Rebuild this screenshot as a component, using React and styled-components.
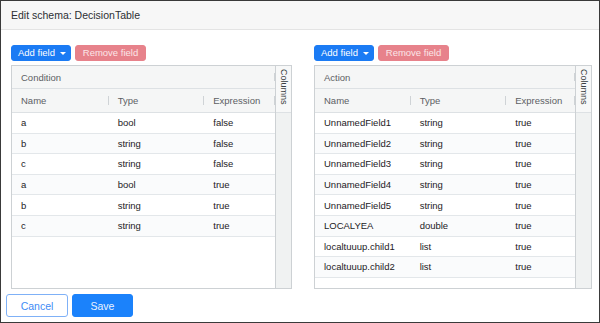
import React from "react";
import styled, { createGlobalStyle } from "styled-components";

const conditionRows = [
  ["a", "bool", "false"],
  ["b", "string", "false"],
  ["c", "string", "false"],
  ["a", "bool", "true"],
  ["b", "string", "true"],
  ["c", "string", "true"],
];

const actionRows = [
  ["UnnamedField1", "string", "true"],
  ["UnnamedField2", "string", "true"],
  ["UnnamedField3", "string", "true"],
  ["UnnamedField4", "string", "true"],
  ["UnnamedField5", "string", "true"],
  ["LOCALYEA", "double", "true"],
  ["localtuuup.child1", "list", "true"],
  ["localtuuup.child2", "list", "true"],
];

function SchemaGrid({ title, rows, colWidths }) {
  return (
    <GridBox>
      <GridMain>
        <GroupHeader>
          <HeaderCell style={{ width: "100%" }}>{title}</HeaderCell>
        </GroupHeader>
        <ColumnHeader>
          <HeaderCell style={{ width: colWidths[0] }}>Name</HeaderCell>
          <HeaderCell style={{ width: colWidths[1] }}>Type</HeaderCell>
          <HeaderCell style={{ width: colWidths[2] }}>Expression</HeaderCell>
        </ColumnHeader>
        <Body>
          {rows.map((r, i) => (
            <Row key={i} $odd={i % 2 === 1}>
              <Cell style={{ width: colWidths[0] }}>{r[0]}</Cell>
              <Cell style={{ width: colWidths[1] }}>{r[1]}</Cell>
              <Cell style={{ width: colWidths[2] }}>{r[2]}</Cell>
            </Row>
          ))}
        </Body>
      </GridMain>
      <SideBar>
        <SideTab>Columns</SideTab>
      </SideBar>
    </GridBox>
  );
}

function Panel({ title, rows, colWidths }) {
  return (
    <Column>
      <Toolbar>
        <PrimaryButton>
          Add field <Caret />
        </PrimaryButton>
        <DangerButton disabled>Remove field</DangerButton>
      </Toolbar>
      <SchemaGrid title={title} rows={rows} colWidths={colWidths} />
    </Column>
  );
}

export default function App() {
  return (
    <>
      <GlobalStyle />
      <Frame>
        <TitleBar>Edit schema: DecisionTable</TitleBar>
        <Content>
          <Panel title="Condition" rows={conditionRows} colWidths={[97, 96, 71]} />
          <Panel title="Action" rows={actionRows} colWidths={[96, 96, 69]} />
        </Content>
        <Footer>
          <OutlineButton>Cancel</OutlineButton>
          <SaveButton>Save</SaveButton>
        </Footer>
      </Frame>
    </>
  );
}

const GlobalStyle = createGlobalStyle`
  * { box-sizing: border-box; }
  html, body { margin: 0; padding: 0; background: #fff; }
  body {
    font-family: "Liberation Sans", Arial, Helvetica, sans-serif;
    color: #1d2125;
  }
`;

const Frame = styled.div`
  width: 600px;
  height: 323px;
  border: 1px solid #3a3a3a;
  display: flex;
  flex-direction: column;
  background: #fff;
  overflow: hidden;
`;

const TitleBar = styled.div`
  height: 29px;
  flex-shrink: 0;
  background: #f7f7f7;
  border-bottom: 1px solid #e4e4e4;
  padding: 0 10px;
  display: flex;
  align-items: center;
  font-size: 10.5px;
  color: #2c2f33;
`;

const Content = styled.div`
  display: grid;
  grid-template-columns: 281px 278px;
  column-gap: 22px;
  padding: 15px 0 0 10px;
`;

const Column = styled.div`
  display: flex;
  flex-direction: column;
`;

const Toolbar = styled.div`
  display: flex;
  gap: 4px;
  height: 20px;
  align-items: flex-start;
`;

const BaseButton = styled.button`
  height: 16px;
  padding: 0 6px;
  border-radius: 3px;
  border: 1px solid transparent;
  font-family: inherit;
  font-size: 9.5px;
  color: #fff;
  display: flex;
  align-items: center;
  gap: 5px;
  line-height: 1;
  white-space: nowrap;
  cursor: pointer;
`;

const PrimaryButton = styled(BaseButton)`
  background: #1b7bf4;
  border-color: #1b7bf4;
  width: 60px;
  padding-left: 6px;
`;

const DangerButton = styled(BaseButton)`
  background: #e7828b;
  border-color: #e7828b;
  color: #fbe6e8;
  width: 71px;
  justify-content: center;
  cursor: default;
`;

const Caret = styled.span`
  width: 0;
  height: 0;
  border-left: 3px solid transparent;
  border-right: 3px solid transparent;
  border-top: 3px solid #fff;
`;

const GridBox = styled.div`
  height: 224px;
  border: 1px solid #cdd1d4;
  display: flex;
  background: #fff;
`;

const GridMain = styled.div`
  flex: 1;
  display: flex;
  flex-direction: column;
  min-width: 0;
`;

const GroupHeader = styled.div`
  height: 23px;
  background: #f5f6f6;
  border-bottom: 1px solid #dde1e4;
  display: flex;
`;

const ColumnHeader = styled.div`
  height: 24px;
  background: #f5f6f6;
  border-bottom: 1px solid #dde1e4;
  display: flex;
`;

const HeaderCell = styled.div`
  position: relative;
  display: flex;
  align-items: center;
  padding: 0 9px;
  font-size: 9.5px;
  color: #5c6064;

  &:after {
    content: "";
    position: absolute;
    right: 0;
    top: 30%;
    height: 40%;
    width: 1px;
    background: #cfd3d6;
  }
`;

const Body = styled.div`
  flex: 1;
  display: flex;
  flex-direction: column;
`;

const Row = styled.div`
  height: 20.6px;
  display: flex;
  border-bottom: 1px solid #e3e7ea;
  background: ${(p) => (p.$odd ? "#fafbfc" : "#fff")};
`;

const Cell = styled.div`
  display: flex;
  align-items: center;
  padding: 0 9px;
  font-size: 9.5px;
  color: #1d2125;
  white-space: nowrap;
`;

const SideBar = styled.div`
  width: 16px;
  flex-shrink: 0;
  border-left: 1px solid #cdd1d4;
  background: #f0f2f2;
  display: flex;
  flex-direction: column;
`;

const SideTab = styled.div`
  height: 47px;
  background: #f7f8f8;
  border-bottom: 1px solid #dde1e4;
  writing-mode: vertical-rl;
  display: flex;
  align-items: center;
  padding-top: 3px;
  font-size: 9px;
  color: #3a3e42;
`;

const Footer = styled.div`
  display: flex;
  gap: 4px;
  padding: 5px 0 0 5px;
`;

const OutlineButton = styled.button`
  width: 62px;
  height: 23px;
  border: 1px solid #7fb1f7;
  border-radius: 3px;
  background: #fff;
  color: #3f8cf5;
  font-family: inherit;
  font-size: 10.5px;
  cursor: pointer;
`;

const SaveButton = styled(OutlineButton)`
  width: 61px;
  background: #1b82fb;
  border-color: #1b82fb;
  color: #eaf3ff;
`;
